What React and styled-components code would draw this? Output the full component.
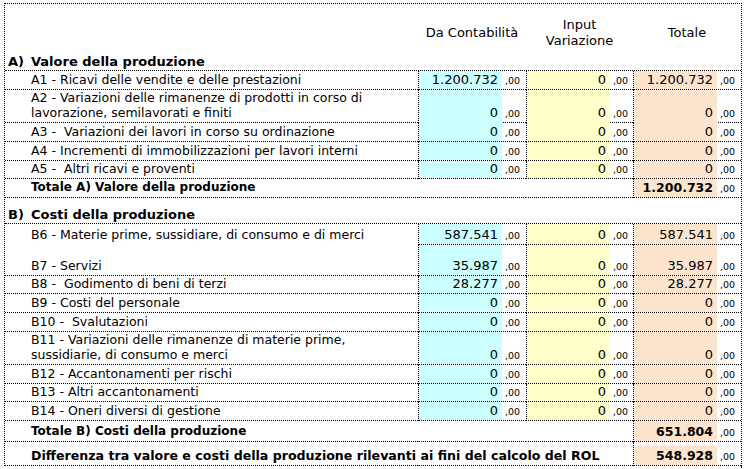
import styled, { createGlobalStyle } from 'styled-components';

const GlobalStyle = createGlobalStyle`
  body {
    margin: 0;
    background: #fff;
    font-family: "DejaVu Sans", Verdana, sans-serif;
    color: #000;
  }
`;

const LINE = '1px dotted #000';
const COLORS = ['#ccffff', '#ffffcc', '#fde4cf'];

const rows = [
  { type: 'item', h: 19, label: 'A1 - Ricavi delle vendite e delle prestazioni', v: ['1.200.732', '0', '1.200.732'] },
  { type: 'item', h: 32, label: 'A2 - Variazioni delle rimanenze di prodotti in corso di\nlavorazione, semilavorati e finiti', v: ['0', '0', '0'] },
  { type: 'item', h: 20, label: 'A3 -  Variazioni dei lavori in corso su ordinazione', v: ['0', '0', '0'] },
  { type: 'item', h: 19, label: 'A4 - Incrementi di immobilizzazioni per lavori interni', v: ['0', '0', '0'] },
  { type: 'item', h: 18, label: 'A5 -  Altri ricavi e proventi', v: ['0', '0', '0'] },
  { type: 'total', h: 19, label: 'Totale A) Valore della produzione', v: '1.200.732' },
  { type: 'section', h: 26, mark: 'B)', label: 'Costi della produzione' },
  { type: 'item', h: 21, label: 'B6 - Materie prime, sussidiare, di consumo e di merci', v: ['587.541', '0', '587.541'], open: true, top: true },
  { type: 'item', h: 31, label: 'B7 - Servizi', v: ['35.987', '0', '35.987'] },
  { type: 'item', h: 18, label: 'B8 -  Godimento di beni di terzi', v: ['28.277', '0', '28.277'] },
  { type: 'item', h: 19, label: 'B9 - Costi del personale', v: ['0', '0', '0'] },
  { type: 'item', h: 19, label: 'B10 -  Svalutazioni', v: ['0', '0', '0'] },
  { type: 'item', h: 33, label: 'B11 - Variazioni delle rimanenze di materie prime,\nsussidiarie, di consumo e merci', v: ['0', '0', '0'] },
  { type: 'item', h: 19, label: 'B12 - Accantonamenti per rischi', v: ['0', '0', '0'] },
  { type: 'item', h: 18, label: 'B13 - Altri accantonamenti', v: ['0', '0', '0'] },
  { type: 'item', h: 19, label: 'B14 - Oneri diversi di gestione', v: ['0', '0', '0'] },
  { type: 'total', h: 21, label: 'Totale B) Costi della produzione', v: '651.804' },
  { type: 'total', h: 24, label: 'Differenza tra valore e costi della produzione rilevanti ai fini del calcolo del ROL', v: '548.928', gap: true, big: true },
];

const Sheet = styled.div`
  width: 738px;
  margin: 3px 0 0 4px;
  border-top: ${LINE};
  border-left: ${LINE};
  border-right: ${LINE};
  box-sizing: border-box;
`;

const Row = styled.div`
  display: grid;
  grid-template-columns: 413px 108px 107px 108px;
  height: ${p => p.$h}px;
  box-sizing: border-box;
`;

const HeadRow = styled(Row)`
  height: 48px;
`;

const HeadCell = styled.div`
  display: flex;
  align-items: center;
  justify-content: center;
  text-align: center;
  padding-top: 9px;
  font-size: 13px;
  line-height: 16px;
`;

const Label = styled.div`
  display: flex;
  align-items: ${p => (p.$top ? 'flex-start' : 'flex-end')};
  padding: ${p => (p.$top ? '3px' : '0')} 0 ${p => (p.$top ? '0' : '2px')} 26px;
  border-bottom: ${p => (p.$open ? '1px solid transparent' : LINE)};
  font-size: ${p => (p.$big ? '12.6px' : p.$bold ? '12px' : '12.5px')};
  line-height: 15px;
  font-weight: ${p => (p.$bold ? 'bold' : 'normal')};
  white-space: pre;
  box-sizing: border-box;
  min-width: 0;
`;

const SectionLabel = styled(Label)`
  padding-left: 3px;
  padding-bottom: 1px;
  font-size: 13px;
  grid-column: 1 / -1;
`;

const Mark = styled.span`
  display: inline-block;
  width: 23px;
`;

const Group = styled.div`
  display: grid;
  grid-template-columns: 83px 1fr;
  border-left: 1px dotted ${p => (p.$line ? '#000' : 'transparent')};
  border-bottom: ${LINE};
  box-sizing: border-box;
  padding-top: ${p => (p.$gap ? '4px' : '0')};
`;

const Value = styled.div`
  display: flex;
  align-items: flex-end;
  justify-content: flex-end;
  padding: 0 4px 2px 0;
  background: ${p => p.$bg || 'transparent'};
  font-size: ${p => (p.$bold ? '12.5px' : '13px')};
  line-height: 15px;
  font-weight: ${p => (p.$bold ? 'bold' : 'normal')};
`;

const Cents = styled.div`
  display: flex;
  align-items: flex-end;
  padding: 0 0 3px 3px;
  font-size: 9.5px;
  line-height: 11px;
`;

const Tail = styled.div`
  height: 4px;
  width: 742px;
  box-sizing: border-box;
  border-right: ${LINE};
`;

function Amount({ value, bg, bold, line = true, gap }) {
  return (
    <Group $line={line} $gap={gap}>
      <Value $bg={bg} $bold={bold}>{value}</Value>
      <Cents>,00</Cents>
    </Group>
  );
}

function Blank() {
  return <Group $line={false} />;
}

export default function App() {
  return (
    <>
      <GlobalStyle />
      <Sheet>
        <HeadRow>
          <div />
          <HeadCell>Da Contabilità</HeadCell>
          <HeadCell>
            Input
            <br />
            Variazione
          </HeadCell>
          <HeadCell>Totale</HeadCell>
        </HeadRow>
        <Row $h={19}>
          <SectionLabel $bold>
            <Mark>A)</Mark>Valore della produzione
          </SectionLabel>
        </Row>
        {rows.map((r, i) => {
          if (r.type === 'section') {
            return (
              <Row key={i} $h={r.h}>
                <SectionLabel $bold>
                  <Mark>{r.mark}</Mark>
                  {r.label}
                </SectionLabel>
              </Row>
            );
          }
          if (r.type === 'total') {
            return (
              <Row key={i} $h={r.h}>
                <Label $bold $big={r.big}>{r.label}</Label>
                <Blank />
                <Blank />
                <Amount value={r.v} bg={COLORS[2]} bold gap={r.gap} />
              </Row>
            );
          }
          return (
            <Row key={i} $h={r.h}>
              <Label $open={r.open} $top={r.top}>{r.label}</Label>
              {r.v.map((v, j) => (
                <Amount key={j} value={v} bg={COLORS[j]} />
              ))}
            </Row>
          );
        })}
      </Sheet>
      <Tail />
    </>
  );
}
